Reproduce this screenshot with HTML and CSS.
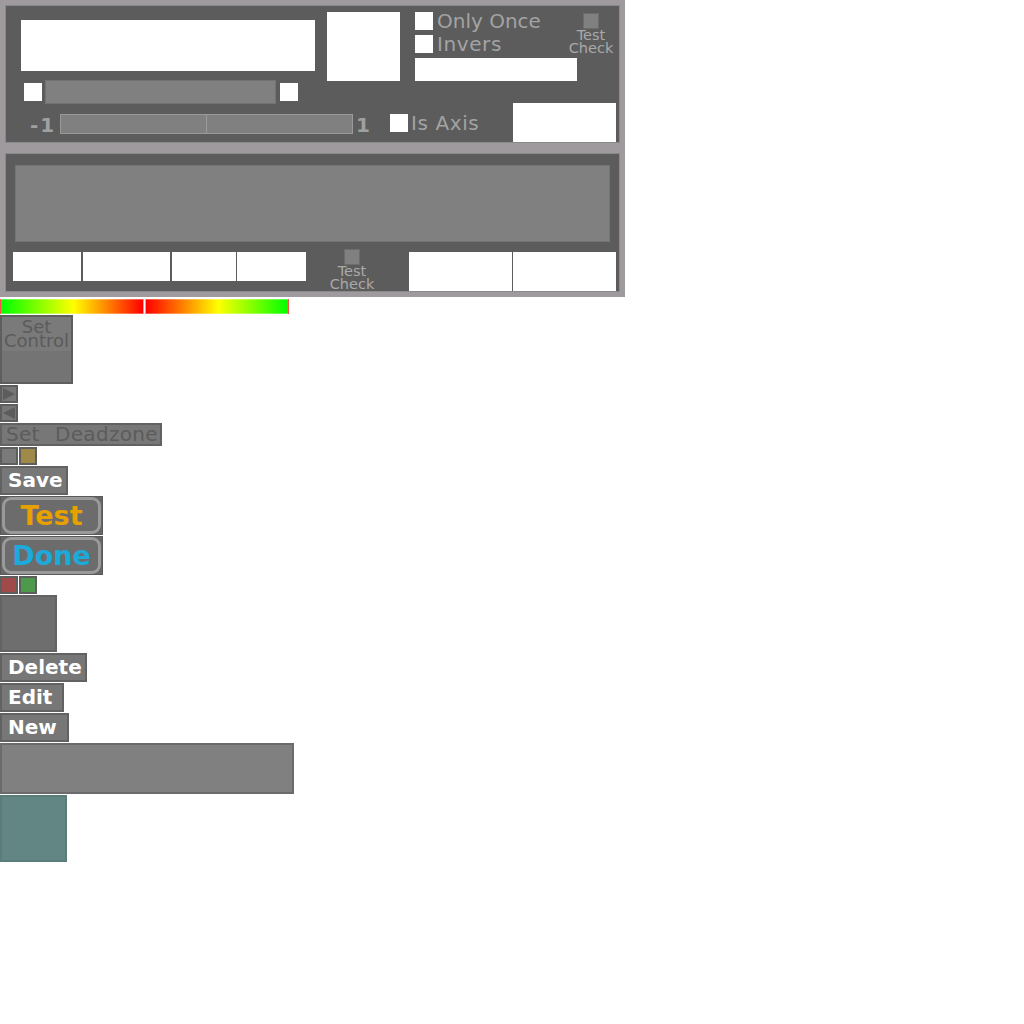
FILE: index.html
```html
<!DOCTYPE html>
<html>
<head>
<meta charset="utf-8">
<link rel="stylesheet" href="styles.css">
</head>
<body>
<div class="frame">
  <div class="panel panel-top">
    <div class="pt-upper">
      <div class="col-a">
        <div class="field field-main"></div>
        <div class="row2">
          <div class="cb"></div>
          <div class="bar"></div>
          <div class="cb cb-right"></div>
        </div>
      </div>
      <div class="field field-square"></div>
      <div class="col-c">
        <div class="chk-row"><div class="cb"></div><span class="lbl">Only Once</span></div>
        <div class="chk-row chk-row-2"><div class="cb"></div><span class="lbl lbl-invers">Invers</span></div>
        <div class="field field-bar"></div>
      </div>
      <div class="test-check test-check-top">
        <div class="tc-box"></div>
        <span class="tc-text">Test</span>
        <span class="tc-text">Check</span>
      </div>
    </div>
    <div class="pt-lower">
      <span class="num num-left">-1</span>
      <div class="slider"><div class="slider-half slider-half-l"></div><div class="slider-half"></div></div>
      <span class="num num-right">1</span>
      <div class="cb cb-axis"></div>
      <span class="lbl lbl-axis">Is Axis</span>
      <div class="field field-corner"></div>
    </div>
  </div>
</div>
<div class="frame">
  <div class="panel panel-bottom">
    <div class="gray-box"></div>
    <div class="cells">
      <div class="field cell cell-short c1"></div>
      <div class="field cell cell-short c2"></div>
      <div class="field cell cell-short c3"></div>
      <div class="field cell cell-short c4"></div>
      <div class="test-check test-check-bottom">
        <div class="tc-box"></div>
        <span class="tc-text">Test</span>
        <span class="tc-text">Check</span>
      </div>
      <div class="field cell cell-tall c5"></div>
      <div class="field cell cell-tall c6"></div>
    </div>
  </div>
</div>
<div class="grad-row">
  <div class="grad grad-l"></div>
  <div class="grad grad-r"></div>
</div>
<div class="stack">
  <div class="btn set-control">
    <div class="sc-label">Set<br>Control</div>
    <div class="sc-rest"></div>
  </div>
  <div class="btn arrow">
    <svg width="14" height="14" viewBox="0 0 14 14"><polygon points="1,1 13,7 1,13" fill="#5c5c5c"/></svg>
  </div>
  <div class="btn arrow">
    <svg width="14" height="14" viewBox="0 0 14 14"><polygon points="13,1 1,7 13,13" fill="#5c5c5c"/></svg>
  </div>
  <div class="btn deadzone">Set  Deadzone</div>
  <div class="sq-row"><div class="btn sq sq-gray"></div><div class="btn sq sq-olive"></div></div>
  <div class="btn txtbtn save">Save</div>
  <div class="fancy"><div class="fancy-inner fancy-test">Test</div></div>
  <div class="fancy"><div class="fancy-inner fancy-done">Done</div></div>
  <div class="sq-row"><div class="btn sq sq-red"></div><div class="btn sq sq-green"></div></div>
  <div class="btn bigsq"></div>
  <div class="btn txtbtn delete">Delete</div>
  <div class="btn txtbtn edit">Edit</div>
  <div class="btn txtbtn new">New</div>
  <div class="btn wide"></div>
  <div class="btn teal"></div>
</div>
</body>
</html>
```
FILE: styles.css
```css
body {
  margin: 0;
  background: #fff;
  font-family: "DejaVu Sans", Verdana, sans-serif;
}
.frame {
  width: 625px;
  box-sizing: border-box;
  padding: 5px;
  background: #9e9a9e;
}
.panel {
  background: #5c5c5c;
  border: 1px solid #8a8a8a;
}
.panel-top { height: 136px; }
.panel-bottom { height: 137px; }
.field { background: #fff; flex: none; }
.cb { width: 18px; height: 18px; background: #fff; flex: none; }

.pt-upper { display: flex; height: 97px; }
.col-a { width: 309px; flex: none; }
.field-main { margin: 14px 0 0 15px; width: 294px; height: 51px; }
.row2 { display: flex; align-items: center; margin-top: 9px; height: 24px; padding-left: 18px; }
.bar {
  margin-left: 3px; width: 231px; height: 24px; box-sizing: border-box;
  background: #808080; border: 1px solid #727272;
}
.cb-right { margin-left: 4px; }
.field-square { margin: 6px 0 0 12px; width: 73px; height: 69px; }
.col-c { margin: 6px 0 0 15px; width: 162px; display: flex; flex-direction: column; flex: none; }
.chk-row { display: flex; height: 18px; gap: 4px; }
.chk-row-2 { margin-top: 5px; }
.lbl { font-size: 20px; line-height: 18px; color: #a3a3a3; white-space: nowrap; }
.lbl-invers { letter-spacing: 0.6px; }
.field-bar { margin-top: 5px; width: 162px; height: 23px; }

.test-check { display: flex; flex-direction: column; align-items: center; width: 16px; flex: none; }
.test-check-top { margin: 7px 0 0 6px; }
.tc-box { width: 16px; height: 16px; box-sizing: border-box; background: #808080; border: 1px solid #6c6c6c; }
.tc-text { font-size: 14.5px; line-height: 13px; color: #a9a9a9; white-space: nowrap; }

.pt-lower { display: flex; align-items: flex-start; height: 39px; }
.num { font-weight: bold; font-size: 20px; line-height: 18px; color: #a0a0a0; margin-top: 13px; flex: none; }
.num-left { margin-left: 24px; width: 30px; letter-spacing: 2px; }
.slider {
  width: 293px; height: 20px; box-sizing: border-box; margin-top: 11px;
  border: 1px solid #9a9a9a; display: flex; flex: none;
}
.slider-half { flex: 1; background: #808080; }
.slider-half-l { border-right: 1px solid #9a9a9a; }
.num-right { margin-left: 3px; width: 34px; }
.cb-axis { margin-top: 11px; }
.lbl-axis { margin: 11px 0 0 3px; letter-spacing: 0.6px; }
.field-corner { margin-left: auto; margin-right: 3px; width: 103px; height: 39px; }

.gray-box {
  margin: 11px 0 0 9px; width: 595px; height: 77px; box-sizing: border-box;
  background: #808080; border: 1px solid #747474;
}
.cells { display: flex; align-items: flex-start; margin-top: 7px; }
.cell-short { height: 29px; margin-top: 3px; }
.cell-tall { height: 39px; margin-top: 3px; }
.c1 { margin-left: 7px; width: 68px; }
.c2 { margin-left: 2px; width: 87px; }
.c3 { margin-left: 2px; width: 64px; }
.c4 { margin-left: 1px; width: 69px; }
.test-check-bottom { margin-left: 38px; }
.c5 { margin-left: 49px; width: 103px; }
.c6 { margin-left: 1px; width: 103px; }

.grad-row { display: flex; gap: 1px; margin-top: 2px; height: 15px; }
.grad { width: 144px; height: 15px; box-sizing: border-box; border: 1px solid rgba(255,255,255,0.3); }
.grad-l { background: linear-gradient(to right, #00ff00 0%, #ffff00 51%, #ff0000 100%); }
.grad-r { background: linear-gradient(to right, #ff0000 0%, #ffff00 51%, #00ff00 100%); }

.stack { display: flex; flex-direction: column; align-items: flex-start; gap: 1px; margin-top: 1px; }
.btn { box-sizing: border-box; border: 2px solid #626262; background: #777; flex: none; }
.set-control { width: 73px; height: 69px; border-color: #5e5e5e; display: flex; flex-direction: column; }
.sc-label {
  height: 34px; background: #7a7a7a; color: #5b5b5b; font-size: 18px; line-height: 14px;
  text-align: center; padding-top: 3px; box-sizing: border-box;
}
.sc-rest { flex: 1; background: #747474; }
.arrow { width: 18px; height: 18px; border-color: #5e5e5e; display: flex; }
.deadzone {
  width: 162px; height: 23px; font-size: 20px; line-height: 19px; color: #5c5c5c;
  padding-left: 4px; white-space: pre; word-spacing: 1px; letter-spacing: 0.3px;
}
.sq-row { display: flex; gap: 1px; }
.sq { width: 18px; height: 18px; border-color: #5e5e5e; }
.sq-gray { background: #7a7a7a; }
.sq-olive { background: #a08a4a; }
.sq-red { background: #a04a4a; }
.sq-green { background: #4d9a4d; }
.txtbtn { height: 29px; font-weight: bold; font-size: 20px; line-height: 25px; color: #fff; padding-left: 6px; }
.save { width: 68px; }
.delete { width: 87px; }
.edit { width: 64px; }
.new { width: 69px; }
.fancy {
  width: 103px; height: 39px; box-sizing: border-box; background: #666;
  border: 1px solid #5a5a5a; padding: 0 1px; display: flex;
}
.fancy-inner {
  flex: 1; border: 3px solid #9a9a9a; border-radius: 9px; background: #6c6c6c;
  display: flex; align-items: center; justify-content: center;
  font-weight: bold; font-size: 27px; line-height: 26px;
}
.fancy-test { color: #e6a100; }
.fancy-done { color: #1da9da; }
.bigsq { width: 57px; height: 57px; background: #6e6e6e; border-color: #636363; }
.wide { width: 294px; height: 51px; background: #808080; border-color: #6b6b6b; }
.teal { width: 67px; height: 67px; background: #618683; border-color: #5a7d7a; }
```
